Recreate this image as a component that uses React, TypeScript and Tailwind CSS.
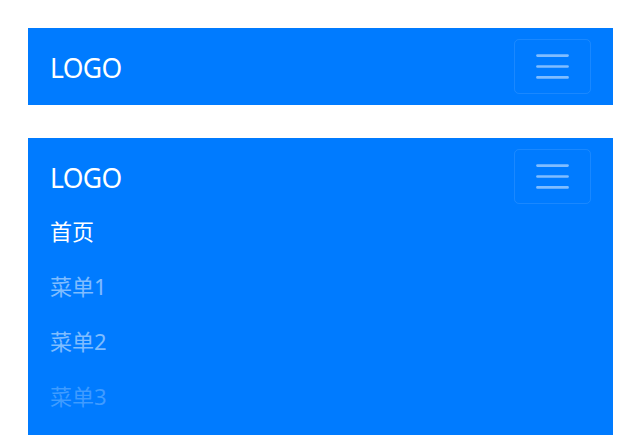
import React from "react";

function Toggler() {
  return (
    <button className="flex h-[55px] w-[77px] items-center justify-center rounded-[5px] border border-white/10">
      <svg width="41" height="41" viewBox="0 0 30 30">
        <path d="M4 7h22M4 15h22M4 23h22" stroke="rgba(255,255,255,0.5)" strokeWidth="2" strokeLinecap="round" strokeMiterlimit="10" />
      </svg>
    </button>
  );
}

function Brand() {
  return <div className="text-[26.5px] tracking-[-0.6px] leading-[41px] pt-[9px] pb-[5px] text-white">LOGO</div>;
}

export default function App() {
  const font = { fontFamily: '"Noto Sans", "Noto Sans CJK SC", sans-serif' };
  return (
    <div className="min-h-[447px] bg-white pt-[28px] pl-[28px]" style={font}>
      <nav className="w-[585px] bg-[#007bff] px-[22px] py-[11px]">
        <div className="flex items-center justify-between">
          <Brand />
          <Toggler />
        </div>
      </nav>
      <nav className="mt-[33px] w-[585px] bg-[#007bff] px-[22px] py-[11px]">
        <div className="flex items-center justify-between">
          <Brand />
          <Toggler />
        </div>
        <ul className="flex flex-col text-[22px] leading-[33px]">
          <li className="py-[11px] text-white">首页</li>
          <li className="py-[11px] text-white/50">菜单1</li>
          <li className="py-[11px] text-white/50">菜单2</li>
          <li className="py-[11px] text-white/25">菜单3</li>
        </ul>
      </nav>
    </div>
  );
}
